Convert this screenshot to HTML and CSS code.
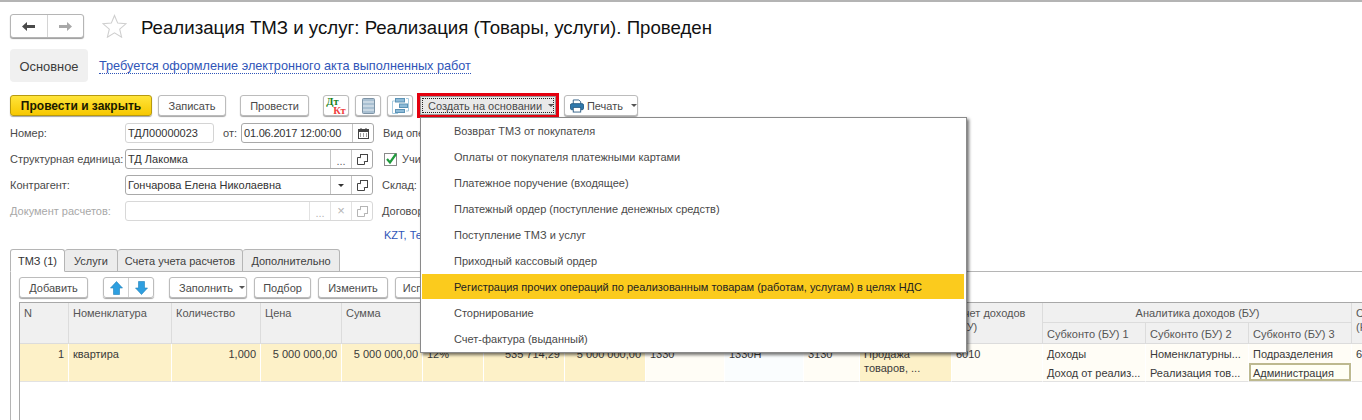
FILE: index.html
```html
<!DOCTYPE html>
<html lang="ru">
<head>
<meta charset="utf-8">
<title>Реализация ТМЗ и услуг</title>
<link rel="stylesheet" href="styles.css">
</head>
<body>
<div class="page">
  <div class="topline"></div>
  <header class="head">
    <div class="nav">
      <span class="nav-btn"><svg width="13" height="9" viewBox="0 0 13 9"><path d="M0 4.5 5 0v3h8v3H5v3z" fill="#4a4a4a"/></svg></span>
      <span class="nav-btn"><svg width="13" height="9" viewBox="0 0 13 9"><path d="M13 4.5 8 0v3H0v3h8v3z" fill="#a8a8a8"/></svg></span>
    </div>
    <svg class="star" width="25" height="24" viewBox="0 0 25 24"><path d="M12.5 1.5l3.2 7.6 8.2.7-6.2 5.4 1.9 8-7.1-4.3-7.1 4.3 1.9-8L1.1 9.8l8.2-.7z" fill="#fff" stroke="#cfcfcf" stroke-width="1.1"/></svg>
    <h1 class="title">Реализация ТМЗ и услуг: Реализация (Товары, услуги). Проведен</h1>
  </header>

  <div class="sections">
    <span class="section">Основное</span>
    <a class="link">Требуется оформление электронного акта выполненных работ</a>
  </div>

  <div class="toolbar">
    <button class="btn primary">Провести и закрыть</button>
    <button class="btn w-save">Записать</button>
    <button class="btn w-post">Провести</button>
    <button class="btn icon dtkt"><span class="dt">Дт</span><span class="kt">Кт</span></button>
    <button class="btn icon"><svg width="13" height="16" viewBox="0 0 13 16"><rect x=".5" y=".5" width="12" height="15" rx="1" fill="#a9c0d2" stroke="#7d93a5"/><path d="M1 4h11M1 8h11M1 12h11" stroke="#e8eff4" stroke-width="1"/></svg></button>
    <button class="btn icon"><svg width="17" height="16" viewBox="0 0 17 16" fill="none"><path d="M3 3H.5v12.500H6M14 .5h2.500V13H14" stroke="#a8cce0"/><rect x="3.500" y=".5" width="9" height="3.500" fill="#8dbbd8" stroke="#5c93b6"/><rect x="7.500" y="6" width="8" height="3.500" fill="#8dbbd8" stroke="#5c93b6"/><rect x="3.500" y="11.500" width="9" height="3" fill="#8dbbd8" stroke="#5c93b6"/></svg></button>
    <button class="btn create"><span class="focus">Создать на основании<i class="caret"></i></span></button>
    <button class="btn print"><svg width="15" height="14" viewBox="0 0 15 14"><path d="M3.500 5V.5h6l2 2V5" fill="#fff" stroke="#2f5f86"/><rect x=".5" y="4.500" width="14" height="6.500" rx="1.500" fill="#2f79ad" stroke="#275c85"/><rect x="3.500" y="8.500" width="8" height="5" fill="#fff" stroke="#2f5f86"/></svg>Печать<i class="caret"></i></button>
  </div>

  <div class="form">
    <div class="row">
      <label class="lbl">Номер:</label>
      <span class="field f-num">ТДЛ00000023</span>
      <span class="from">от:</span>
      <span class="field f-date"><span class="val date">01.06.2017 12:00:00</span><span class="fbtn"><svg width="11" height="11" viewBox="0 0 11 11"><rect x=".5" y="1.500" width="10" height="9" fill="#fff" stroke="#444"/><path d="M0 2h11v2H0zM2.500 0h1v2h-1zM7.500 0h1v2h-1z" fill="#444"/><path d="M2 6h1M5 6h1M8 6h1M2 8h1M5 8h1M8 8h1" stroke="#444"/></svg></span></span>
      <span class="rlbl">Вид операции:</span>
    </div>
    <div class="row">
      <label class="lbl">Структурная единица:</label>
      <span class="field f-wide"><span class="val">ТД Лакомка</span><span class="fbtn dots">...</span><span class="fbtn"><svg class="copy" width="11" height="11" viewBox="0 0 11 11" fill="#fff" stroke="#444"><rect x="3.500" y=".5" width="7" height="7"/><path d="M3 3.500H.5v7h7V8"/></svg></span></span>
      <span class="check"><svg width="14" height="14" viewBox="0 0 14 14"><rect x=".5" y="1.500" width="12" height="12" fill="#fff" stroke="#8a8a8a"/><path d="M3 7l3 3.500L12 2" fill="none" stroke="#1f9a3c" stroke-width="2.200"/></svg>Учитывать</span>
    </div>
    <div class="row">
      <label class="lbl">Контрагент:</label>
      <span class="field f-wide"><span class="val">Гончарова Елена Николаевна</span><span class="fbtn"><i class="caret dark"></i></span><span class="fbtn"><svg class="copy" width="11" height="11" viewBox="0 0 11 11" fill="#fff" stroke="#444"><rect x="3.500" y=".5" width="7" height="7"/><path d="M3 3.500H.5v7h7V8"/></svg></span></span>
      <span class="rlbl">Склад:</span>
    </div>
    <div class="row">
      <label class="lbl muted">Документ расчетов:</label>
      <span class="field f-wide off"><span class="val"></span><span class="fbtn dots">...</span><span class="fbtn x">×</span><span class="fbtn"><svg class="copy" width="11" height="11" viewBox="0 0 11 11" fill="#fff" stroke="#b5b5b5"><rect x="3.500" y=".5" width="7" height="7"/><path d="M3 3.500H.5v7h7V8"/></svg></span></span>
      <span class="rlbl">Договор:</span>
    </div>
    <div class="row short"><a class="kzt">KZT, Тенге</a></div>
  </div>

  <nav class="tabs">
    <span class="tab active t1">ТМЗ (1)</span>
    <span class="tab t2">Услуги</span>
    <span class="tab t3">Счета учета расчетов</span>
    <span class="tab t4">Дополнительно</span>
  </nav>

  <section class="panel">
    <div class="cmds">
      <button class="btn cmd c-add">Добавить</button>
      <div class="updown">
        <span><svg width="13" height="14" viewBox="0 0 13 14"><path d="M6.500 .5 12.500 7H9.500v6.500h-6V7H.5z" fill="#2e9fe0" stroke="#1f7fb8" stroke-width=".6"/></svg></span>
        <span><svg width="13" height="14" viewBox="0 0 13 14"><path d="M6.500 13.500 12.500 7H9.500V.5h-6V7H.5z" fill="#2e9fe0" stroke="#1f7fb8" stroke-width=".6"/></svg></span>
      </div>
      <button class="btn cmd c-fill">Заполнить<i class="caret"></i></button>
      <button class="btn cmd c-pick">Подбор</button>
      <button class="btn cmd c-edit">Изменить</button>
      <button class="btn cmd c-fix">Исправить</button>
    </div>
    <div class="gridbox">
    <table class="grid">
      <colgroup>
        <col class="w49"><col class="w103"><col class="w89"><col class="w81"><col class="w81"><col class="w61"><col class="w81"><col class="w81"><col class="w79"><col class="w79"><col class="w56"><col class="w92"><col class="w91"><col class="w103"><col class="w103"><col class="w103"><col class="w103">
      </colgroup>
      <thead>
        <tr>
          <th rowspan="2">N</th>
          <th rowspan="2">Номенклатура</th>
          <th rowspan="2">Количество</th>
          <th rowspan="2">Цена</th>
          <th rowspan="2">Сумма</th>
          <th rowspan="2">% НДС</th>
          <th rowspan="2">НДС</th>
          <th rowspan="2">Всего</th>
          <th rowspan="2">Счет учета</th>
          <th rowspan="2">Счет учета НУ</th>
          <th rowspan="2">Счет</th>
          <th rowspan="2">Вид дохода</th>
          <th rowspan="2">Счет доходов<br>(БУ)</th>
          <th colspan="3" class="group">Аналитика доходов (БУ)</th>
          <th rowspan="2">Счет доходов<br>(НУ)</th>
        </tr>
        <tr>
          <th class="sub">Субконто (БУ) 1</th>
          <th class="sub">Субконто (БУ) 2</th>
          <th class="sub">Субконто (БУ) 3</th>
        </tr>
      </thead>
      <tbody>
        <tr>
          <td class="yl num">1</td>
          <td class="yl">квартира</td>
          <td class="yl num">1,000</td>
          <td class="yl num">5 000 000,00</td>
          <td class="yl num">5 000 000,00</td>
          <td class="yl">12%</td>
          <td class="yl num">535 714,29</td>
          <td class="yl num">5 000 000,00</td>
          <td class="cr">1330</td>
          <td class="bl">1330Н</td>
          <td class="cr">3130</td>
          <td class="yl wrap">Продажа товаров, ...</td>
          <td class="cr">6010</td>
          <td class="cr two"><div>Доходы</div><div>Доход от реализ...</div></td>
          <td class="cr two"><div>Номенклатурны...</div><div>Реализация тов...</div></td>
          <td class="cr two"><div>Подразделения</div><div class="cur">Администрация</div></td>
          <td class="cr">6010</td>
        </tr>
      </tbody>
    </table>
    </div>
  </section>

  <div class="menu">
    <div class="mi">Возврат ТМЗ от покупателя</div>
    <div class="mi">Оплаты от покупателя платежными картами</div>
    <div class="mi">Платежное поручение (входящее)</div>
    <div class="mi">Платежный ордер (поступление денежных средств)</div>
    <div class="mi">Поступление ТМЗ и услуг</div>
    <div class="mi">Приходный кассовый ордер</div>
    <div class="mi sel">Регистрация прочих операций по реализованным товарам (работам, услугам) в целях НДС</div>
    <div class="mi">Сторнирование</div>
    <div class="mi">Счет-фактура (выданный)</div>
  </div>
</div>
</body>
</html>
```
FILE: styles.css
```css
* { box-sizing: border-box; }
html, body { margin: 0; height: 100%; overflow: hidden; background: #fff; }
body { font: 11px/14px "Liberation Sans", Arial, sans-serif; color: #4a4a4a; }
.page { position: relative; width: 1362px; height: 420px; overflow: hidden; }
.topline { height: 2px; background: #b4b4b4; }

.head { display: flex; align-items: center; height: 24px; margin: 12px 0 0 10px; }
.nav { display: flex; width: 74px; height: 24px; border: 1px solid #b5b5b5; border-radius: 3px; box-shadow: 0 1px 1px #9a9a9a; background: #fff; }
.nav-btn { flex: 1; display: flex; align-items: center; justify-content: center; }
.nav-btn + .nav-btn { border-left: 1px solid #d4d4d4; }
.star { margin-left: 18px; }
.title { margin: 3px 0 0 14px; font: 400 18.65px/24px "Liberation Sans", sans-serif; color: #111; white-space: nowrap; }

.sections { display: flex; align-items: center; height: 33px; margin: 11px 0 0 10px; }
.section { display: flex; align-items: center; justify-content: center; width: 78px; height: 33px; padding-top: 2px; background: #f0f0f0; border-radius: 4px; font-size: 12.9px; color: #3c3c3c; }
.link { margin: 2px 0 0 11px; font-size: 12.7px; color: #2f55b8; border-bottom: 1px dotted #2f55b8; line-height: 13px; white-space: nowrap; }

.btn { display: inline-flex; align-items: center; justify-content: center; height: 21px; padding: 0; border: 1px solid #bcbcbc; border-radius: 3px; background: #fff; box-shadow: 0 1px 1px #a5a5a5; font: 11px/14px "Liberation Sans", sans-serif; color: #4a4a4a; white-space: nowrap; }
.toolbar { display: flex; align-items: center; height: 21px; margin: 13px 0 0 10px; }
.primary { width: 142px; background: linear-gradient(#ffe43a, #f7c800); border-color: #b79a10; color: #1a1a00; font-size: 12px; font-weight: 700; }
.w-save { width: 68px; margin-left: 6px; }
.w-post { width: 69px; margin-left: 14px; }
.icon { width: 26px; margin-left: 6px; }
.w-post + .icon { margin-left: 14px; }
.dtkt { flex-direction: column; font: 700 10.5px/9px "Liberation Serif", serif; }
.dt { color: #1a7f1a; margin-right: 7px; }
.kt { color: #f04040; margin-left: 7px; }
.create { width: 136px; height: 19px; margin-left: 7px; background: #e9e9e9; border-color: #999; border-radius: 0; box-shadow: none; outline: 3px solid #e4000f; }
.focus { display: flex; align-items: center; width: 132px; height: 15px; padding-left: 5px; border: 1px dotted #222; }
.focus .caret { margin-left: 6px; }
.print { width: 74px; margin-left: 8px; padding-left: 5px; justify-content: flex-start; gap: 3px; }
.print .caret { margin-left: 5px; }
.caret { display: inline-block; width: 0; height: 0; margin-left: 5px; border: 3px solid transparent; border-top: 3px solid #555; border-bottom: 0; }
.caret.dark { margin-left: 0; border-top-color: #333; }

.form { margin: 7px 0 0 10px; display: flex; flex-direction: column; gap: 6px; }
.row { display: flex; align-items: center; height: 20px; white-space: nowrap; }
.row.short { height: 16px; padding-left: 374px; }
.lbl { width: 115px; flex: none; }
.muted { color: #a8a8a8; }
.field { display: flex; height: 20px; border: 1px solid #a9a9a9; border-radius: 3px; background: #fff; color: #333; }
.val { flex: 1; padding: 2px 0 0 2px; }
.date { letter-spacing: -.2px; }
.f-num { width: 89px; padding: 2px 0 0 2px; border-color: #d4d4d4; }
.from { width: 27px; text-align: right; padding-right: 4px; }
.f-date { width: 133px; }
.f-wide { width: 248px; }
.off { border-color: #d8d8d8; }
.fbtn { display: flex; align-items: center; justify-content: center; width: 21px; border-left: 1px solid #c4c4c4; }
.dots { align-items: flex-end; line-height: 14px; color: #666; }
.off .fbtn { border-left-color: #e2e2e2; color: #b5b5b5; }
.x { font-size: 13px; }
.rlbl { margin-left: 9px; }
.check { display: flex; align-items: center; gap: 4px; margin-left: 11px; }
.kzt { color: #2f55b8; }

.tabs { display: flex; height: 22px; margin: 6px 0 0 10px; position: relative; z-index: 1; }
.tab { display: flex; align-items: center; justify-content: center; height: 23px; background: #ececec; border: 1px solid #b5b5b5; border-left: 0; border-radius: 3px 3px 0 0; color: #404040; }
.tab.active { background: #fff; border-left: 1px solid #b5b5b5; border-bottom-color: #fff; color: #333; }
.t1 { width: 55px; }
.t2 { width: 53px; }
.t3 { width: 125px; }
.t4 { width: 97px; }

.panel { margin-left: 10px; height: 149px; border-top: 1px solid #b5b5b5; border-left: 1px solid #b5b5b5; padding: 5px 0 0 8px; }
.cmds { display: flex; align-items: center; height: 21px; }
.cmd { width: 69px; }
.c-add { margin-right: 15px; }
.updown { display: flex; width: 51px; height: 21px; margin-right: 15px; border: 1px solid #bcbcbc; border-radius: 3px; box-shadow: 0 1px 1px #a5a5a5; }
.updown span { flex: 1; display: flex; align-items: center; justify-content: center; }
.updown span + span { border-left: 1px solid #d0d0d0; }
.c-fill { width: 78px; margin-right: 7px; padding-left: 9px; justify-content: flex-start; }
.c-fill .caret { margin-left: 6px; }
.c-pick { width: 57px; margin-right: 7px; }
.c-edit { width: 70px; margin-right: 7px; }
.c-fix { width: 70px; }

.gridbox { height: 118px; margin-top: 4px; border-left: 1px solid #a8a8a8; }
.grid { table-layout: fixed; width: 1435px; border-collapse: separate; border-spacing: 0; border-top: 1px solid #a8a8a8; }
.w49 { width: 49px; } .w103 { width: 103px; } .w89 { width: 89px; } .w81 { width: 81px; } .w61 { width: 61px; } .w79 { width: 79px; } .w56 { width: 56px; } .w92 { width: 92px; } .w91 { width: 91px; }
.grid th { height: 20px; padding: 3px 3px 0 4px; vertical-align: top; text-align: left; font-weight: 400; background: #f0f0f0; color: #555; border-right: 1px solid #dcdcdc; border-bottom: 1px solid #dcdcdc; overflow: hidden; }
.grid th.sub { height: 21px; padding-top: 4px; }
.grid th.group { text-align: center; }
.grid td { height: 38px; padding: 3px 4px 0; vertical-align: top; color: #3a3a3a; border-right: 1px solid #fff; border-bottom: 1px solid #e2e2e2; white-space: nowrap; overflow: hidden; }
.wrap { white-space: normal !important; }
.yl { background: #fdf1c8; }
.cr { background: #fffdf6; }
.bl { background: #fafdfe; }
.num { text-align: right; }
.two div { height: 16px; line-height: 14px; }
.two div + div { height: 18px; padding-top: 3px; }
.two div.cur { margin: 0 -4px 0 -4px; padding: 1px 0 0 2px; border: 2px solid #bdb98f; background: #fffff4; }

.menu { position: absolute; left: 420px; top: 117px; width: 547px; height: 236px; padding: 0 1px; background: #fff; border: 1px solid #8a8a8a; box-shadow: 2px 2px 3px rgba(0,0,0,.55); }
.mi { display: flex; align-items: center; height: 26px; padding-left: 32px; color: #4a4a4a; white-space: nowrap; }
.mi.sel { height: 25px; margin: 0 1px 1px 0; background: #fbcb1d; color: #222; }
```
